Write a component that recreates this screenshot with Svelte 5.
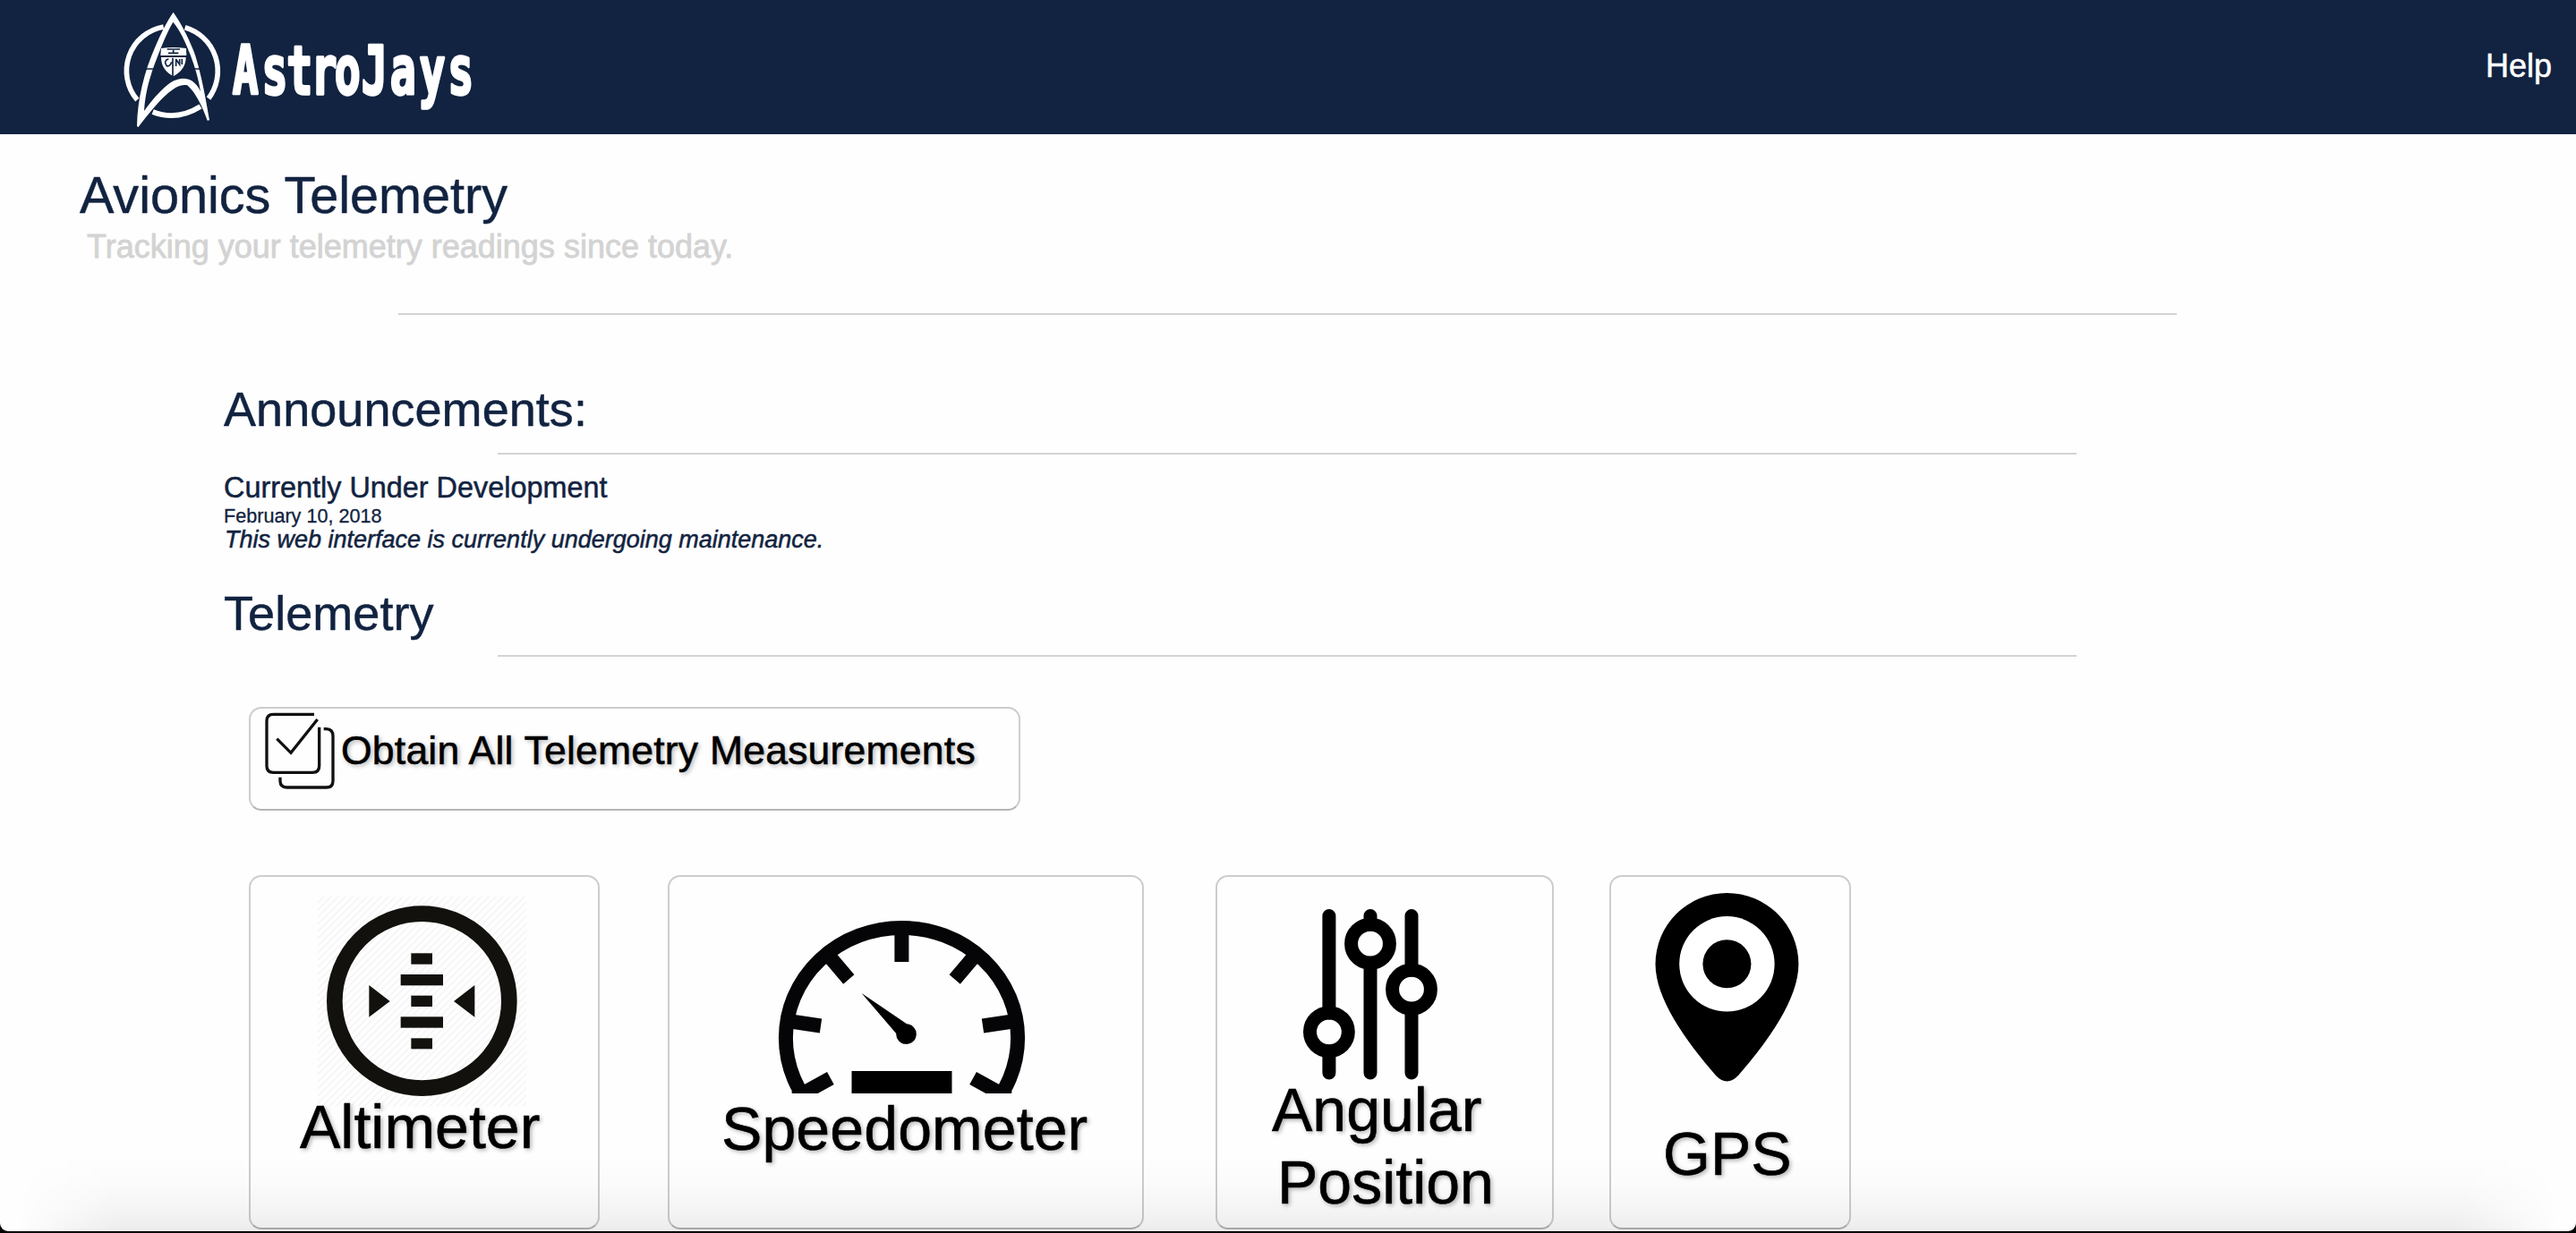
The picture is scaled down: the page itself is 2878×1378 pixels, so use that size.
<script>
  const wordmark = 'AstroJays';
  // Horizontal centre of every wordmark letter, in logo units
  const centres = [463, 561, 644, 726, 805, 895, 991, 1089, 1184];
  const squeeze = 0.64;
  const letterX = centres.map((c) => (c / squeeze).toFixed(1)).join(' ');
</script>

<div class="page">
  <header class="topbar">
    <svg class="logo" viewBox="0 0 1320 450" role="img" aria-label="AstroJays">
      <g fill="none" stroke="#fff" stroke-width="17">
        <path d="M188 90A150 150 0 0 0 100 335" />
        <path d="M260 92A152 152 0 0 1 339 330" />
        <path d="M152 375Q232 407 312 357" />
      </g>
      <path
        fill="#fff"
        fill-rule="evenodd"
        d="M221 41C245 75 268 118 288 168C306 214 325 300 342 403L335 404C316 352 296 312 268 286C232 277 184 320 103 427L99 422C101 330 124 240 159 160C177 116 199 72 221 41ZM220 74C203 102 184 148 168 190C142 256 127 310 123 372C158 324 188 294 212 277C236 260 266 259 283 271C296 281 304 290 312 306C306 268 294 226 278 184C262 142 243 100 220 74Z"
      />
      <path stroke="#112340" stroke-width="5" d="M126 231H156M286 231H316" />
      <path fill="#fff" d="M180 162Q221 156 264 162L265 186H178ZM180 192H263Q264 232 221 256Q180 234 180 192Z" />
      <g fill="none" stroke="#112340" stroke-width="5">
        <path d="M200 165H243M204 178H238M221 168V178" />
        <path d="M219 194V256M205 197Q186 204 199 221Q210 224 215 208M230 197V222M230 199L242 216V198M250 197V216" />
      </g>
      <g class="wordmark" transform="scale({squeeze} 1)">
        <text x={letterX} y="314">{wordmark}</text>
      </g>
    </svg>
    <a class="help" href="#help">Help</a>
  </header>

  <main>
    <h1>Avionics Telemetry</h1>
    <p class="tagline">Tracking your telemetry readings since today.</p>
    <hr class="rule wide" />

    <section class="block">
      <h2>Announcements:</h2>
      <hr class="rule" />
      <h3>Currently Under Development</h3>
      <p class="date">February 10, 2018</p>
      <p class="note">This web interface is currently undergoing maintenance.</p>
    </section>

    <section class="block telemetry">
      <h2>Telemetry</h2>
      <hr class="rule" />

      <button class="tile all">
        <svg width="82" height="92" viewBox="60 24 246 276" aria-hidden="true">
          <g fill="none" stroke="#111" stroke-width="10">
            <path d="M231 43H94Q72 43 72 65V216Q72 238 94 238H226Q248 238 248 216V86" />
            <path d="M106 125L153 172L242 60" />
            <path d="M263 92H272Q294 93 294 116V266Q294 288 272 288H139Q117 287 117 266V254" />
          </g>
        </svg>
        <span>Obtain All Telemetry Measurements</span>
      </button>

      <div class="tiles">
        <button class="tile altimeter">
          <svg width="388" height="239" viewBox="60 60 1164 717" aria-hidden="true">
            <defs>
              <pattern id="hatch" width="24" height="24" patternUnits="userSpaceOnUse">
                <path d="M-6 6L6 -6M0 24L24 0M18 30L30 18" stroke="#f5f5f5" stroke-width="5" />
              </pattern>
            </defs>
            <rect x="285" y="125" width="700" height="705" fill="url(#hatch)" />
            <circle cx="634" cy="476" r="292.5" fill="none" stroke="#12110d" stroke-width="53" />
            <g fill="#12110d">
              <rect x="598" y="316" width="71" height="37" />
              <rect x="563" y="387" width="142" height="37" />
              <rect x="598" y="458" width="71" height="37" />
              <rect x="563" y="529" width="142" height="37" />
              <rect x="598" y="601" width="71" height="36" />
              <path d="M457 423L527 477L457 530ZM811 423L741 477L811 530Z" />
            </g>
          </svg>
          <span>Altimeter</span>
        </button>

        <button class="tile speedometer">
          <svg width="528" height="241" viewBox="18 20 528 241" aria-hidden="true">
            <defs>
              <clipPath id="dial"><rect x="130" y="60" width="300" height="202" /></clipPath>
            </defs>
            <g class="ticks" clip-path="url(#dial)">
              <ellipse cx="277.5" cy="200" rx="129.6" ry="123.1" />
              <path d="M195 107L218.3 134.5M150 181L187 186.5M158 267L197.9 245" />
              <path d="M360 107L336.7 134.5M405 181L368 186.5M397 267L357.1 245" />
              <path d="M277.4 75V115" />
            </g>
            <path d="M232.6 150L283 184.3A11.3 11.3 0 1 1 271.2 195Z" />
            <rect x="221.5" y="237" width="112" height="25" />
          </svg>
          <span>Speedometer</span>
        </button>

        <button class="tile angular">
          <svg width="374" height="220" viewBox="20 20 374 220" aria-hidden="true">
            <g fill="none" stroke="#000" stroke-width="15" stroke-linecap="round">
              <path d="M144.9 63.5V172M144.9 215V239M191 63.5V73M191 117V239M237 63.5V124M237 168V239" />
              <circle cx="144.9" cy="193.3" r="21.4" />
              <circle cx="191" cy="94.7" r="21.4" />
              <circle cx="237" cy="145.7" r="21.4" />
            </g>
          </svg>
          <span>Angular<br /><i>Position</i></span>
        </button>

        <button class="tile gps">
          <svg width="266" height="269" viewBox="460 20 266 269" aria-hidden="true">
            <path d="M509.5 117.5A79.95 79.5 0 0 1 669.4 117.5C669.4 156 636 203 602 242Q589.4 255 577 242C543 203 509.5 156 509.5 117.5Z" />
            <circle cx="589.4" cy="117.3" r="53.2" fill="#fff" />
            <circle cx="589.4" cy="117.3" r="27" />
          </svg>
          <span>GPS</span>
        </button>
      </div>
    </section>
  </main>
  <div class="shade"></div>
</div>

<style>
  :global(body) {
    margin: 0;
    background: #000;
    overflow: hidden;
  }
  .page {
    position: relative;
    width: 2878px;
    height: 1376px;
    overflow: hidden;
    border-radius: 0 0 9px 9px;
    background: #fefefe;
    color: #112340;
    font-family: 'Liberation Sans', Arial, sans-serif;
    -webkit-text-stroke: 0.5px currentColor;
  }
  .topbar {
    display: flex;
    align-items: flex-start;
    justify-content: space-between;
    height: 150px;
    padding: 0 27px 0 120px;
    box-sizing: border-box;
    background: #112340;
  }
  .logo {
    width: 440px;
    height: 150px;
  }
  .wordmark text {
    fill: #fff;
    stroke: #fff;
    stroke-width: 10px;
    stroke-linejoin: round;
    font: bold 226px 'DejaVu Sans Mono', monospace;
    text-anchor: middle;
  }
  .help {
    padding-top: 53px;
    color: #fff;
    font-size: 36px;
    line-height: 41px;
    text-decoration: none;
  }
  h1,
  h2,
  h3,
  p {
    margin: 0;
    font-weight: 400;
  }
  h1 {
    padding: 35px 0 0 89px;
    font-size: 57.6px;
    line-height: 66px;
  }
  .tagline {
    padding: 4px 0 0 97px;
    color: #d3d3d3;
    font-size: 36px;
    line-height: 42px;
    -webkit-text-stroke-width: 0.8px;
  }
  .rule {
    width: 1764px;
    height: 2px;
    margin: 18px 0 0 306px;
    border: 0;
    background: #d3d3d3;
  }
  .rule.wide {
    width: 1987px;
    margin: 53px 0 0 445px;
  }
  .block {
    padding: 74px 0 0 250px;
  }
  .telemetry {
    padding-top: 37px;
  }
  .telemetry .rule {
    margin-top: 16px;
  }
  h2 {
    font-size: 54px;
    letter-spacing: 0.05px;
    line-height: 62px;
  }
  h3 {
    padding-top: 18px;
    font-size: 32.4px;
    line-height: 38px;
  }
  .date {
    font-size: 21.6px;
    line-height: 25px;
    -webkit-text-stroke-width: 0.3px;
  }
  .note {
    padding-left: 1px;
    font-size: 27px;
    font-style: italic;
    line-height: 28px;
  }
  .tile {
    display: flex;
    flex-direction: column;
    align-items: flex-start;
    box-sizing: border-box;
    height: 396px;
    padding: 0;
    border: 2px solid #cdcdcd;
    border-bottom-color: #b5b5b5;
    border-radius: 14px;
    background: #fefefe;
    color: #000;
    font: 68px/81px 'Liberation Sans', Arial, sans-serif;
    text-align: left;
    text-shadow: 2px 2px 5px rgba(0, 0, 0, 0.32);
    -webkit-text-stroke: 0.6px #000;
  }
  .tile svg {
    flex: none;
    overflow: visible;
  }
  .tile.all {
    flex-direction: row;
    gap: 5px;
    width: 862px;
    height: 116px;
    margin: 56px 0 72px 28px;
    padding-left: 14px;
    font-size: 44.5px;
    letter-spacing: 0.22px;
    line-height: 52px;
  }
  .all span {
    padding-top: 21px;
  }
  .tiles {
    display: flex;
    padding-left: 28px;
  }
  .altimeter {
    width: 392px;
    margin-right: 76px;
  }
  .altimeter span {
    padding-left: 55px;
  }
  .speedometer {
    width: 532px;
    margin-right: 80px;
  }
  .speedometer span {
    padding-left: 58px;
    letter-spacing: 0.1px;
  }
  .ticks {
    fill: none;
    stroke: #050406;
    stroke-width: 16px;
  }
  .angular {
    width: 378px;
    margin-right: 62px;
  }
  .angular span {
    padding-left: 61px;
  }
  .angular i {
    padding-left: 6px;
    font-style: normal;
  }
  .gps {
    width: 270px;
  }
  .gps span {
    padding-left: 58px;
  }
  .shade {
    position: absolute;
    right: 0;
    bottom: 0;
    left: 0;
    height: 84px;
    background: linear-gradient(transparent, rgba(0, 0, 0, 0.012) 35%, rgba(0, 0, 0, 0.035) 68%, rgba(0, 0, 0, 0.07));
    mask-image: linear-gradient(90deg, transparent 20px, #000 130px, #000 2748px, transparent 2858px);
    pointer-events: none;
  }
</style>
